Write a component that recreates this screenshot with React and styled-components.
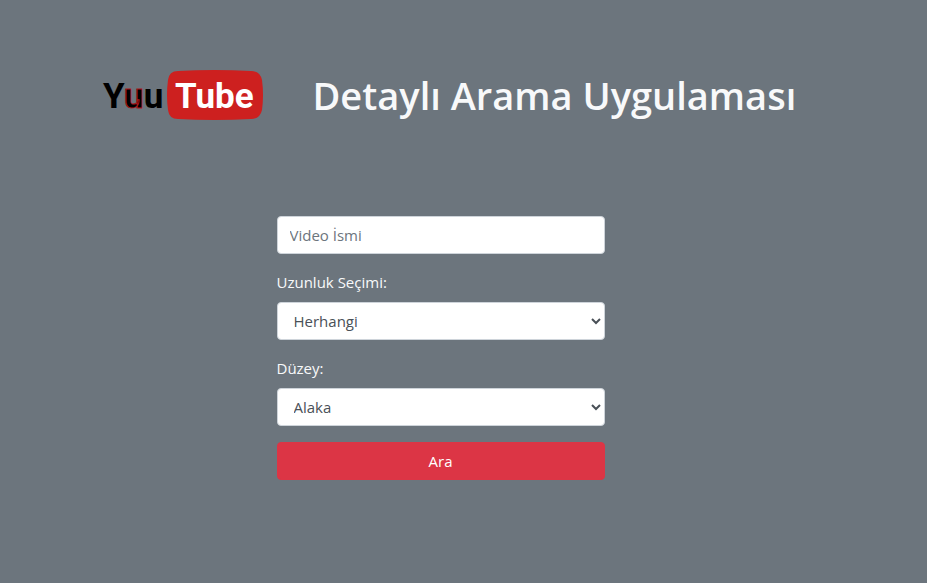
import React from "react";
import styled, { createGlobalStyle } from "styled-components";

const GlobalStyle = createGlobalStyle`
  *, *::before, *::after { box-sizing: border-box; }
  body {
    margin: 0;
    background: #6c757d;
    color: #f8f9fa;
    font: 400 16px/24px "Segoe UI", "Open Sans", "Noto Sans", sans-serif;
  }
`;

const Page = styled.main`
  width: 100%;
  max-width: 724px;
  margin: 0 auto;
  padding-top: 70px;
`;

const Header = styled.header`
  display: flex;
  align-items: center;
  gap: 50px;
`;

const Logo = styled.svg`
  flex: none;
  width: 161px;
  height: 50px;
  font-family: Roboto, "Liberation Sans", sans-serif;
  font-size: 35px;
  font-weight: 700;
`;

const Title = styled.h1`
  margin: 0;
  font-size: 38px;
  line-height: 48px;
  font-weight: 600;
  white-space: nowrap;
`;

const Form = styled.form`
  display: flex;
  flex-direction: column;
  gap: 16px;
  width: 328px;
  max-width: 100%;
  margin: 96px 0 0 175px;
`;

const Field = styled.div`
  display: flex;
  flex-direction: column;
  gap: 8px;
`;

const Label = styled.label`
  font-size: 15px;
`;

const TextInput = styled.input`
  width: 100%;
  height: 38px;
  padding: 6px 12px;
  border: 1px solid #ced4da;
  border-radius: 4px;
  background: #fff;
  color: #495057;
  font: inherit;
  font-size: 15px;
  &::placeholder { color: #6c757d; opacity: 1; }
`;

const Select = styled.select`
  width: 100%;
  height: 38px;
  padding: 6px 12px;
  border: 1px solid #ced4da;
  border-radius: 4px;
  background: #fff;
  color: #495057;
  font: inherit;
  font-size: 15px;
`;

const SearchButton = styled.button`
  height: 38px;
  border: 1px solid #dc3545;
  border-radius: 4px;
  background: #dc3545;
  color: #fff;
  font: inherit;
  font-size: 15px;
  cursor: pointer;
`;

function BrandLogo() {
  return (
    <Logo viewBox="0 0 161 50" role="img" aria-label="YuuTube">
      <path
        d="M76 1Q112-1 149 1Q158 1 160 10Q162 25 160 40Q158 49 149 49Q112 51 76 49Q67 49 66 40Q64 25 66 10Q67 1 76 1Z"
        fill="#cd201f"
      />
      <text x="1" y="38">
        Y<tspan stroke="#a8151b" strokeWidth="1">u</tspan>u
      </text>
      <text x="73" y="38" fill="#fff">Tube</text>
    </Logo>
  );
}

export default function App() {
  return (
    <>
      <GlobalStyle />
      <Page>
        <Header>
          <BrandLogo />
          <Title>Detaylı Arama Uygulaması</Title>
        </Header>
        <Form onSubmit={(event) => event.preventDefault()}>
          <TextInput type="text" placeholder="Video İsmi" aria-label="Video İsmi" />
          <Field>
            <Label htmlFor="duration">Uzunluk Seçimi:</Label>
            <Select id="duration">
              <option>Herhangi</option>
            </Select>
          </Field>
          <Field>
            <Label htmlFor="order">Düzey:</Label>
            <Select id="order">
              <option>Alaka</option>
            </Select>
          </Field>
          <SearchButton type="submit">Ara</SearchButton>
        </Form>
      </Page>
    </>
  );
}
